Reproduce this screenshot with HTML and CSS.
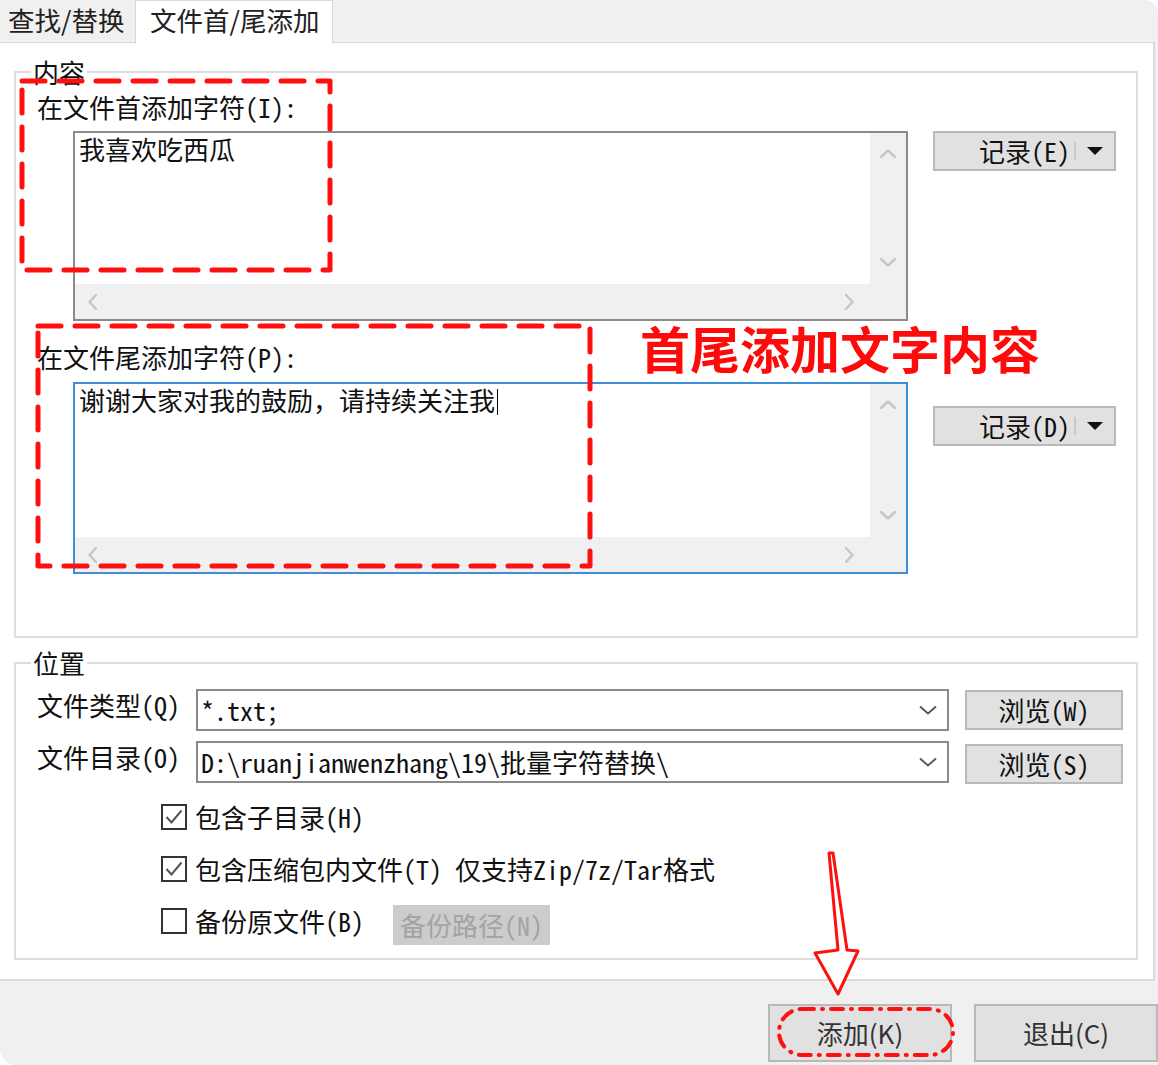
FILE: index.html
```html
<!DOCTYPE html>
<html lang="zh-CN">
<head>
<meta charset="utf-8">
<title>文件首/尾添加</title>
<link rel="stylesheet" href="styles.css">
</head>
<body>
<div class="window">
  <div class="tabs">
    <div class="tab">查找/替换</div>
    <div class="tab active">文件首/尾添加</div>
  </div>

  <div class="page">
    <fieldset class="group content-group">
      <legend>内容</legend>
      <div class="field-label">在文件首添加字符(I):</div>
      <div class="memo-row">
        <div class="memo">
          <div class="memo-text">我喜欢吃西瓜</div>
          <div class="vbar">
            <svg class="chev" width="16" height="9" viewBox="0 0 16 9"><polyline points="1,8 8,1.5 15,8"/></svg>
            <svg class="chev" width="16" height="9" viewBox="0 0 16 9"><polyline points="1,1 8,7.5 15,1"/></svg>
          </div>
          <div class="hbar">
            <svg class="chev" width="9" height="16" viewBox="0 0 9 16"><polyline points="8,1 1.5,8 8,15"/></svg>
            <svg class="chev" width="9" height="16" viewBox="0 0 9 16"><polyline points="1,1 7.5,8 1,15"/></svg>
          </div>
          <div class="corner"></div>
        </div>
        <div class="split-btn">
          <span>记录(E)</span><span class="split-sep"></span><span class="split-arrow"></span>
        </div>
      </div>

      <div class="field-label second">在文件尾添加字符(P):</div>
      <div class="memo-row">
        <div class="memo focused">
          <div class="memo-text">谢谢大家对我的鼓励，请持续关注我<span class="caret"></span></div>
          <div class="vbar">
            <svg class="chev" width="16" height="9" viewBox="0 0 16 9"><polyline points="1,8 8,1.5 15,8"/></svg>
            <svg class="chev" width="16" height="9" viewBox="0 0 16 9"><polyline points="1,1 8,7.5 15,1"/></svg>
          </div>
          <div class="hbar">
            <svg class="chev" width="9" height="16" viewBox="0 0 9 16"><polyline points="8,1 1.5,8 8,15"/></svg>
            <svg class="chev" width="9" height="16" viewBox="0 0 9 16"><polyline points="1,1 7.5,8 1,15"/></svg>
          </div>
          <div class="corner"></div>
        </div>
        <div class="split-btn lower">
          <span>记录(D)</span><span class="split-sep"></span><span class="split-arrow"></span>
        </div>
      </div>
    </fieldset>

    <fieldset class="group location-group">
      <legend>位置</legend>
      <div class="loc-row">
        <div class="loc-label">文件类型(Q)</div>
        <div class="combo">
          <span>*.txt;</span>
          <svg class="combo-chev" width="18" height="10" viewBox="0 0 18 10"><polyline points="1,1.5 9,8.5 17,1.5"/></svg>
        </div>
        <div class="btn browse">浏览(W)</div>
      </div>
      <div class="loc-row">
        <div class="loc-label">文件目录(O)</div>
        <div class="combo">
          <span>D:\ruanjianwenzhang\19\批量字符替换\</span>
          <svg class="combo-chev" width="18" height="10" viewBox="0 0 18 10"><polyline points="1,1.5 9,8.5 17,1.5"/></svg>
        </div>
        <div class="btn browse second">浏览(S)</div>
      </div>

      <div class="checks">
        <div class="check-row">
          <span class="cbox"><svg width="22" height="22" viewBox="0 0 22 22"><polyline points="3.5,11 8.5,16.5 18.5,4.5"/></svg></span>
          <span>包含子目录(H)</span>
        </div>
        <div class="check-row">
          <span class="cbox"><svg width="22" height="22" viewBox="0 0 22 22"><polyline points="3.5,11 8.5,16.5 18.5,4.5"/></svg></span>
          <span>包含压缩包内文件(T) 仅支持Zip/7z/Tar格式</span>
        </div>
        <div class="check-row">
          <span class="cbox"></span>
          <span>备份原文件(B)</span>
          <span class="btn disabled">备份路径(N)</span>
        </div>
      </div>
    </fieldset>
  </div>

  <div class="footer">
    <div class="btn big">添加(K)</div>
    <div class="btn big">退出(C)</div>
  </div>

  <div class="note">首尾添加文字内容</div>

  <svg class="annot" width="1158" height="1065" viewBox="0 0 1158 1065">
    <rect class="dash" x="22" y="81" width="308" height="189"/>
    <rect class="dash" x="38" y="326" width="552" height="240"/>
    <rect class="dashdot" x="779" y="1009" width="174" height="46" rx="23" ry="23"/>
    <path class="arrow" d="M829,853 L838,950 L815,953 L838,994 L858,951 L847,950 L833,853 Z"/>
  </svg>
</div>
</body>
</html>
```

FILE: styles.css
```css
* { box-sizing: border-box; }

html, body {
  margin: 0;
  padding: 0;
  background: #ffffff;
}

body {
  font-family: "Noto Sans Mono CJK SC", "Noto Sans CJK SC", sans-serif;
  font-size: 26px;
  color: #111111;
}

.window {
  position: relative;
  width: 1158px;
  height: 1065px;
  background: #f0f0f0;
  overflow: hidden;
  border-top-right-radius: 14px;
  border-bottom-left-radius: 16px;
}

/* Tabs */
.tabs {
  display: flex;
  height: 42px;
  align-items: flex-start;
}

.tab {
  font-family: "Noto Sans CJK SC", sans-serif;
  font-size: 26.5px;
  width: 135px;
  height: 42px;
  line-height: 40px;
  padding-left: 8px;
  color: #222222;
  white-space: nowrap;
}

.tab.active {
  position: relative;
  z-index: 1;
  width: 198px;
  height: 44px;
  line-height: 38px;
  padding-left: 14px;
  background: #ffffff;
  border: 1px solid #d9d9d9;
  border-bottom: none;
}

/* Page */
.page {
  width: 1155px;
  height: 939px;
  background: #ffffff;
  border-top: 1px solid #d9d9d9;
  border-right: 2px solid #dadada;
  border-bottom: 2px solid #dadada;
  padding: 13px 15px 0 14px;
}

.group {
  margin: 0;
  min-width: 0;
  border: 2px solid #dedede;
  padding: 3px 0 62px 21px;
}

.group legend {
  padding: 0 2px;
  margin-left: -6px;
  line-height: 32px;
}

.location-group {
  margin-top: 9px;
  padding: 10px 0 13px 21px;
}

.field-label {
  line-height: 32px;
  white-space: nowrap;
}

.field-label.second {
  margin-top: 20px;
}

.memo-row {
  display: flex;
  align-items: flex-start;
  margin-top: 8px;
}

.field-label.second + .memo-row {
  margin-top: 9px;
}

/* Memo (multi-line edit) */
.memo {
  margin-left: 36px;
  width: 835px;
  height: 190px;
  border: 2px solid #8a8a8a;
  background: #ffffff;
  display: grid;
  grid-template-columns: 1fr 36px;
  grid-template-rows: 1fr 35px;
}

.memo.focused {
  height: 192px;
  border-color: #3d8fd9;
}

.memo-text {
  padding: 0 4px;
  line-height: 32px;
  white-space: nowrap;
}

.caret {
  display: inline-block;
  width: 1px;
  height: 26px;
  margin-left: 2px;
  vertical-align: -4px;
  background: #000000;
}

.vbar {
  background: #f0f0f0;
  display: flex;
  flex-direction: column;
  justify-content: space-between;
  align-items: center;
  padding: 16px 0 17px;
}

.hbar {
  background: #f0f0f0;
  display: flex;
  justify-content: space-between;
  align-items: center;
  padding: 0 16px 0 13px;
}

.corner {
  background: #f0f0f0;
}

.chev polyline {
  fill: none;
  stroke: #c6c6c6;
  stroke-width: 2.4;
  stroke-linecap: round;
  stroke-linejoin: round;
}

/* Split button */
.split-btn {
  margin-left: 25px;
  width: 183px;
  height: 40px;
  background: #e1e1e1;
  border: 2px solid #b9b9b9;
  display: flex;
  align-items: center;
  justify-content: flex-end;
  padding-right: 11px;
  line-height: 32px;
  white-space: nowrap;
}

.split-btn.lower {
  margin-top: 24px;
}

.split-sep {
  width: 2px;
  height: 18px;
  margin: 0 11px 0 4px;
  background: #c9c9c9;
}

.split-arrow {
  width: 0;
  height: 0;
  border-left: 8px solid transparent;
  border-right: 8px solid transparent;
  border-top: 8px solid #111111;
}

/* Location rows */
.loc-row {
  display: flex;
  align-items: flex-start;
}

.loc-row + .loc-row {
  margin-top: 10px;
}

.loc-label {
  width: 159px;
  line-height: 32px;
  white-space: nowrap;
}

.combo {
  width: 753px;
  height: 42px;
  border: 2px solid #8a8a8a;
  background: #ffffff;
  display: flex;
  align-items: center;
  justify-content: space-between;
  padding: 0 10px 0 3px;
  line-height: 32px;
  white-space: nowrap;
}

.combo-chev polyline {
  fill: none;
  stroke: #555555;
  stroke-width: 1.8;
}

.btn {
  background: #e1e1e1;
  border: 2px solid #b9b9b9;
  display: flex;
  align-items: center;
  justify-content: center;
  line-height: 32px;
  white-space: nowrap;
}

.browse {
  margin-left: 16px;
  margin-top: 1px;
  width: 158px;
  height: 40px;
}

.browse.second {
  margin-top: 3px;
}

/* Checkboxes */
.checks {
  margin-left: 124px;
  margin-top: 17px;
}

.check-row {
  display: flex;
  align-items: flex-start;
  line-height: 32px;
  white-space: nowrap;
}

.check-row + .check-row {
  margin-top: 20px;
}

.cbox {
  width: 26px;
  height: 26px;
  margin-top: 3px;
  margin-right: 8px;
  border: 2px solid #333333;
  background: #ffffff;
  display: flex;
}

.cbox polyline {
  fill: none;
  stroke: #555555;
  stroke-width: 2;
}

.btn.disabled {
  margin-left: 29px;
  width: 157px;
  height: 40px;
  background: #cccccc;
  border-color: #cccccc;
  color: #a3a3a3;
}

/* Footer */
.footer {
  display: flex;
  justify-content: flex-end;
  gap: 22px;
  padding-top: 23px;
}

.btn.big {
  width: 184px;
  height: 58px;
  font-family: "Noto Sans CJK SC", sans-serif;
  font-size: 26px;
  color: #333333;
}

/* Annotations */
.note {
  position: absolute;
  left: 640px;
  top: 322px;
  font-family: "Noto Sans CJK SC", sans-serif;
  font-weight: 700;
  font-size: 50px;
  line-height: 50px;
  color: #ff0a0a;
  white-space: nowrap;
}

.annot {
  position: absolute;
  left: 0;
  top: 0;
  pointer-events: none;
}

.annot .dash {
  fill: none;
  stroke: #ff1010;
  stroke-width: 5;
  stroke-dasharray: 23 14;
  stroke-linecap: round;
  stroke-linejoin: round;
}

.annot .dashdot {
  fill: none;
  stroke: #ff1010;
  stroke-width: 4;
  stroke-dasharray: 12 8 1 8;
  stroke-linecap: round;
}

.annot .arrow {
  fill: #ffffff;
  stroke: #ff1010;
  stroke-width: 3;
  stroke-linejoin: round;
}
```
